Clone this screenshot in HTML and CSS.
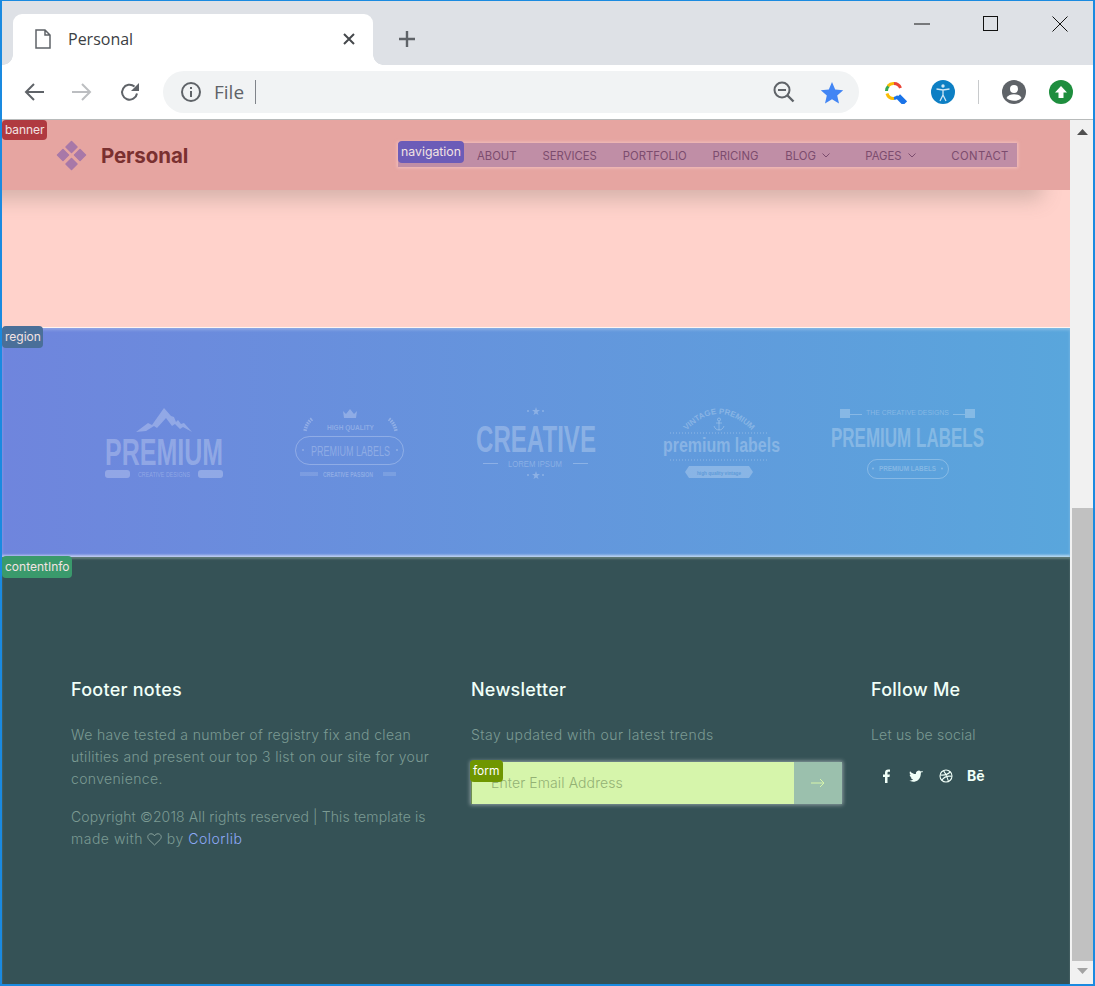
FILE: index.html
```html
<!DOCTYPE html>
<html lang="en">
<head>
<meta charset="utf-8">
<title>Personal</title>
<link rel="stylesheet" href="styles.css">
</head>
<body>
<div class="window">
  <header class="tabstrip">
    <div class="tab">
      <svg class="tab-doc" width="16" height="20" viewBox="0 0 16 20"><path d="M1 1h9l5 5v13H1z M10 1v5h5" fill="none" stroke="#5f6368" stroke-width="1.5"/></svg>
      <span class="tab-title">Personal</span>
      <svg class="tab-close" width="14" height="14" viewBox="0 0 14 14"><path d="M2 2l10 10M12 2L2 12" stroke="#45484c" stroke-width="2"/></svg>
    </div>
    <svg class="newtab" width="18" height="18" viewBox="0 0 18 18"><path d="M9 1v16M1 9h16" stroke="#5f6368" stroke-width="2.4"/></svg>
    <div class="winctl">
      <svg width="16" height="16" viewBox="0 0 16 16"><path d="M0 8h16" stroke="#111" stroke-width="1"/></svg>
      <svg width="16" height="16" viewBox="0 0 16 16"><rect x=".5" y=".5" width="14" height="14" fill="none" stroke="#111"/></svg>
      <svg width="16" height="16" viewBox="0 0 16 16"><path d="M.5.5l15 15M15.500.5l-15 15" stroke="#111"/></svg>
    </div>
  </header>
  <nav class="toolbar">
    <svg class="tool tool-back" width="22" height="20" viewBox="0 0 22 20"><path d="M21 10H3M11 2l-8 8 8 8" fill="none" stroke="#5f6368" stroke-width="2"/></svg>
    <svg class="tool tool-fwd" width="22" height="20" viewBox="0 0 22 20"><path d="M1 10h18M11 2l8 8-8 8" fill="none" stroke="#bcbec1" stroke-width="2"/></svg>
    <svg class="tool tool-reload" width="22" height="22" viewBox="0 0 22 22"><path d="M18 12.500A7.500 7.500 0 1 1 15.500 5.500" fill="none" stroke="#5f6368" stroke-width="2"/><path d="M20 2v8h-8z" fill="#5f6368"/></svg>
    <div class="omnibox">
      <svg class="info" width="22" height="22" viewBox="0 0 22 22"><circle cx="11" cy="11" r="9" fill="none" stroke="#5f6368" stroke-width="2"/><path d="M11 10v6M11 6v2" stroke="#5f6368" stroke-width="2"/></svg>
      <span class="omni-text">File</span>
      <span class="omni-caret"></span>
      <svg class="zoomout" width="22" height="22" viewBox="0 0 22 22"><circle cx="9" cy="9" r="7.500" fill="none" stroke="#5f6368" stroke-width="2"/><path d="M5 9h8" stroke="#5f6368" stroke-width="2"/><path d="M14.500 14.500l6 6" stroke="#5f6368" stroke-width="2.400"/></svg>
      <svg class="star" width="24" height="23" viewBox="0 0 24 23"><path d="M12 1l3.200 7.500 8 .7-6 5.300 1.800 8L12 18.300 5 22.500l1.800-8-6-5.300 8-.7z" fill="#4285f4"/></svg>
    </div>
    <div class="ext-group">
      <svg class="ext" width="24" height="24" viewBox="0 0 24 24"><path d="M3.500 11a7 7 0 0 1 2-5" fill="none" stroke="#34a853" stroke-width="3"/><path d="M5 6a7 7 0 0 1 6-2.500" fill="none" stroke="#fbbc05" stroke-width="3"/><path d="M11 3.500a7 7 0 0 1 6.500 4.500" fill="none" stroke="#ea4335" stroke-width="3"/><path d="M4 13.500a7 7 0 0 0 7 5" fill="none" stroke="#fbbc05" stroke-width="3"/><path d="M11 18.500a7 7 0 0 0 3-1.200l6 6 2-2-6-6" fill="none" stroke="#1a73e8" stroke-width="3"/></svg>
      <svg class="ext" width="24" height="24" viewBox="0 0 24 24"><circle cx="12" cy="12" r="12" fill="#0d7fc4"/><circle cx="12" cy="6" r="1.700" fill="#cfe6f5"/><path d="M5.500 9l6.500 1 6.500-1M12 10v5M12 15l-3 6M12 15l3 6" fill="none" stroke="#cfe6f5" stroke-width="1.300"/></svg>
      <span class="ext-sep"></span>
      <svg class="ext" width="24" height="24" viewBox="0 0 24 24"><circle cx="12" cy="12" r="12" fill="#5f6368"/><circle cx="12" cy="9" r="4" fill="#fff"/><path d="M4.500 18c1.500-3 4.500-3.800 7.500-3.800s6 .8 7.500 3.800c-2 2-4.500 2.700-7.500 2.700s-5.500-.7-7.500-2.700z" fill="#fff"/></svg>
      <svg class="ext" width="24" height="24" viewBox="0 0 24 24"><circle cx="12" cy="12" r="12" fill="#1e8e3e"/><path d="M12 6l6 6.500h-3.500V18h-5v-5.500H6z" fill="#fff"/></svg>
    </div>
  </nav>
  <div class="viewport">
    <main class="page">
      <section class="banner">
        <span class="tag tag-banner">banner</span>
        <div class="brand">
          <svg width="34" height="32" viewBox="0 0 34 32" class="brand-mark"><g fill="#a878a8" stroke="#a878a8" stroke-width="1.500" stroke-linejoin="round"><path d="M16.500 1.500l5.500 5.500-5.500 5.500L11 7z"/><path d="M8 9.500l5.500 5.500L8 20.500 2.500 15z"/><path d="M25 9.500l5.500 5.500-5.500 5.500-5.500-5.500z"/><path d="M16.500 18.500l5.500 5.500-5.500 5.500L11 24z"/></g></svg>
          <span class="brand-name">Personal</span>
        </div>
        <div class="mainnav">
          <span class="tag tag-nav">navigation</span>
          <span class="nav-item">About</span>
          <span class="nav-item">Services</span>
          <span class="nav-item">Portfolio</span>
          <span class="nav-item">Pricing</span>
          <span class="nav-item nav-blog">Blog <svg class="chev" width="8" height="5" viewBox="0 0 8 5"><path d="M.5.500L4 4 7.500.5" fill="none" stroke="#7c4c6e"/></svg></span>
          <span class="nav-item nav-pages">Pages <svg class="chev" width="8" height="5" viewBox="0 0 8 5"><path d="M.5.500L4 4 7.500.5" fill="none" stroke="#7c4c6e"/></svg></span>
          <span class="nav-item nav-contact">Contact</span>
        </div>
      </section>
      <section class="blank"></section>
      <section class="region">
        <span class="tag tag-region">region</span>
        <svg class="logo" viewBox="0 0 186 80" width="186" height="80">
          <path class="lf" d="M65 29l12-9 4 2 12-17 7 8 3 1 2 5 2-2 3 4 3-1 8 9-9-5-3 2-5-5-3 2-6-8-9 10-3-2-8 5z"/>
          <text class="lf lc" x="34" y="62" font-size="36" textLength="118" lengthAdjust="spacingAndGlyphs">PREMIUM</text>
          <rect class="lf" x="34" y="67" width="25" height="8" rx="3"/><rect class="lf" x="127" y="67" width="25" height="8" rx="3"/>
          <text class="lf" x="67" y="74" font-size="7" textLength="52" lengthAdjust="spacingAndGlyphs">CREATIVE DESIGNS</text>
        </svg>
        <svg class="logo" viewBox="0 0 186 80" width="186" height="80">
          <path class="lf" d="M87 15l-1-7 3 3 4-5 4 5 3-3-1 7z"/>
          <path class="lwheat" d="M55 16c-4 3-6 7-7 12M132 16c4 3 6 7 7 12"/>
          <text class="lf lb" x="70" y="27" font-size="7" textLength="47" lengthAdjust="spacingAndGlyphs">HIGH QUALITY</text>
          <rect class="ls" x="38.500" y="33.500" width="108" height="28" rx="14"/>
          <text class="lf" x="54" y="53" font-size="14" textLength="79" lengthAdjust="spacingAndGlyphs">PREMIUM LABELS</text>
          <circle class="lf" cx="46" cy="47" r="1"/><circle class="lf" cx="140" cy="47" r="1"/>
          <path class="ls" d="M43 70h18M43 72h18M126 70h13M126 72h13"/>
          <text class="lf lb" x="66" y="74" font-size="7" textLength="50" lengthAdjust="spacingAndGlyphs">CREATIVE PASSION</text>
        </svg>
        <svg class="logo" viewBox="0 0 186 80" width="186" height="80">
          <path class="lf" d="M93 4l1 3h3l-2.500 2 1 3L93 10.500 90.500 12l1-3L89 7h3z"/><circle class="lf" cx="85" cy="8" r="1"/><circle class="lf" cx="100" cy="8" r="1"/>
          <text class="lf lc" x="33" y="49" font-size="36" textLength="120" lengthAdjust="spacingAndGlyphs">CREATIVE</text>
          <text class="lf" x="65" y="64" font-size="9" textLength="54" lengthAdjust="spacingAndGlyphs">LOREM IPSUM</text>
          <path class="ls" d="M40 60.500h15M130 60.500h15"/>
          <path class="lf" d="M93 68l1 3h3l-2.500 2 1 3L93 74.500 90.500 76l1-3L89 71h3z"/><circle class="lf" cx="85" cy="72" r="1"/><circle class="lf" cx="100" cy="72" r="1"/>
        </svg>
        <svg class="logo" viewBox="0 0 186 80" width="186" height="80">
          <path id="arc4" d="M57 28Q90-6 123 28" fill="none"/>
          <text class="lf lb" font-size="8"><textPath href="#arc4" startOffset="50%" text-anchor="middle">VINTAGE PREMIUM</textPath></text>
          <circle class="ls" cx="90" cy="16.500" r="1.500"/><path class="ls" d="M90 18v9M87 20h6M85 23c1 3 3 4 5 4s4-1 5-4"/>
          <path class="ldot" d="M41 30h98M41 57h98"/>
          <text class="lf lc" x="34" y="49" font-size="20" textLength="117" lengthAdjust="spacingAndGlyphs">premium labels</text>
          <path class="lf" d="M60 63h60l4 6-4 6H60l-4-6z"/>
          <text class="lnote" x="68" y="72" font-size="6" textLength="44" lengthAdjust="spacingAndGlyphs">high quality vintage</text>
        </svg>
        <svg class="logo" viewBox="0 0 186 80" width="186" height="80">
          <rect class="lf" x="25" y="6" width="10" height="9"/><rect class="lf" x="150" y="6" width="10" height="9"/>
          <path class="ls" d="M35 11.500h12M138 11.500h12"/>
          <text class="lf" x="51" y="12" font-size="8" textLength="83" lengthAdjust="spacingAndGlyphs">THE CREATIVE DESIGNS</text>
          <text class="lf lc" x="16" y="44" font-size="27.500" textLength="153" lengthAdjust="spacingAndGlyphs">PREMIUM LABELS</text>
          <rect class="ls" x="52.500" y="56.500" width="81" height="19" rx="9.500"/>
          <text class="lf lb" x="64" y="68" font-size="7" textLength="57" lengthAdjust="spacingAndGlyphs">PREMIUM LABELS</text>
          <circle class="lf" cx="58" cy="65.500" r="1"/><circle class="lf" cx="127" cy="65.500" r="1"/>
        </svg>
      </section>
      <footer class="foot">
        <span class="tag tag-foot">contentInfo</span>
        <div class="col">
          <h4 class="col-title">Footer notes</h4>
          <p class="col-text">We have tested a number of registry fix and clean utilities and present our top 3 list on our site for your convenience.</p>
          <p class="col-text col-copy">Copyright ©2018 All rights reserved | This template is <span class="copy-end">made with <svg class="heart" width="15" height="13" viewBox="0 0 15 13"><path d="M7.500 12L1.800 6.500C-.5 3.500 1.500.8 4 .8c1.500 0 2.800.8 3.500 2C8.200 1.600 9.500.8 11 .8c2.500 0 4.500 2.700 2.200 5.700z" fill="none" stroke="#8aa39d"/></svg> by <a class="credit" href="#">Colorlib</a></span></p>
        </div>
        <div class="col">
          <h4 class="col-title">Newsletter</h4>
          <p class="col-text col-wide">Stay updated with our latest trends</p>
          <form class="signup">
            <span class="tag tag-form">form</span>
            <span class="signup-input">Enter Email Address</span>
            <span class="signup-btn"><svg width="14" height="10" viewBox="0 0 14 10"><path d="M0 5h13M9 1l4 4-4 4" fill="none" stroke="#d6f5ab"/></svg></span>
          </form>
        </div>
        <div class="col">
          <h4 class="col-title">Follow Me</h4>
          <p class="col-text col-narrow">Let us be social</p>
          <div class="social">
            <svg class="soc" width="14" height="14" viewBox="0 0 14 14"><path d="M8.500 14V8h2l.4-2.500H8.500V4c0-.8.3-1.200 1.200-1.200H11V.6C10.600.5 10 .4 9.200.4 7.300.4 6 1.500 6 3.700v1.800H4V8h2v6z" fill="#f0fff8"/></svg>
            <svg class="soc" width="14" height="14" viewBox="0 0 14 14"><path d="M14 2.900c-.5.200-1 .4-1.600.4.600-.3 1-.9 1.200-1.500-.5.300-1.100.6-1.800.7a2.800 2.800 0 0 0-4.800 2.600C4.600 5 2.500 3.900 1.100 2.200.3 3.500.7 5.200 2 6c-.5 0-.9-.1-1.300-.3 0 1.400 1 2.500 2.300 2.800-.4.100-.9.100-1.300 0 .4 1.100 1.400 1.900 2.600 2-1.200.9-2.700 1.300-4.300 1.100 4.100 2.600 11.900 1.200 11.900-7.900.6-.4 1.100-.9 1.500-1.500z" fill="#f0fff8"/></svg>
            <svg class="soc" width="14" height="14" viewBox="0 0 14 14"><g fill="none" stroke="#f0fff8" stroke-width="1.100"><circle cx="7" cy="7" r="6"/><path d="M4.500 1.700c2 2.500 4 6.500 5 10.800M1.200 6c4 .5 7.500-.5 10-3M2.800 11.200c2-3 5.500-4.700 10-3.900"/></g></svg>
            <span class="soc-be">Bē</span>
          </div>
        </div>
      </footer>
    </main>
    <aside class="scrollbar">
      <svg class="sb-arrow" width="11" height="6" viewBox="0 0 11 6"><path d="M5.500 0L11 6H0z" fill="#505050"/></svg>
      <div class="sb-track"><div class="sb-thumb"></div></div>
      <svg class="sb-arrow" width="11" height="6" viewBox="0 0 11 6"><path d="M0 0h11L5.500 6z" fill="#a3a3a3"/></svg>
    </aside>
  </div>
</div>
</body>
</html>
```
FILE: styles.css
```css
* { box-sizing: border-box; }
html, body { margin: 0; padding: 0; overflow: hidden; }
.window {
  width: 1095px; height: 986px;
  display: flex; flex-direction: column;
  border: solid #1a8ae0; border-width: 1px 2px 2px 2px;
  background: #fff; overflow: hidden;
  font-family: Inter, "Liberation Sans", sans-serif;
}

/* browser chrome */
.tabstrip { height: 64px; flex: none; background: #dee1e6; display: flex; align-items: flex-start; padding: 13px 0 0 11px; position: relative; }
.tab { width: 360px; height: 51px; background: #fff; border-radius: 9px 9px 0 0; display: flex; align-items: center; padding: 0 17px 2px 22px; position: relative; margin-right: 25px; }
.tab::before, .tab::after { content: ""; position: absolute; bottom: 0; width: 10px; height: 10px; }
.tab::before { left: -10px; background: radial-gradient(circle at 0 0, #dee1e6 9.500px, #fff 10px); }
.tab::after { right: -10px; background: radial-gradient(circle at 100% 0, #dee1e6 9.500px, #fff 10px); }
.tab-title { font-family: "Open Sans", sans-serif; font-size: 16px; color: #3c4043; margin-left: 17px; flex: 1; }
.tab-doc { flex: none; }
.newtab { margin-top: 16px; }
.winctl { position: absolute; right: 0; top: 15px; display: flex; gap: 53px; padding-right: 25px; }
.toolbar { height: 55px; flex: none; background: #fff; display: flex; align-items: center; padding: 1px 0 1px 21px; border-bottom: 1px solid #b8bbbb; }
.tool { flex: none; margin-right: 26px; }
.tool-reload { margin-right: 22px; }
.omnibox { width: 696px; height: 42px; border-radius: 21px; background: #f1f3f4; display: flex; align-items: center; padding: 0 15px 0 17px; flex: none; }
.omni-text { font-family: "Open Sans", sans-serif; font-size: 19px; color: #5f6368; margin-left: 12px; }
.omni-caret { width: 1px; height: 24px; background: #80848a; margin-left: 11px; margin-right: auto; flex: none; }
.zoomout { margin-right: 25px; margin-left: 1px; }
.ext-group { display: flex; align-items: center; margin-left: 24px; }
.ext { flex: none; margin-right: 23.500px; }
.ext-sep { width: 1px; height: 24px; background: #c8cacc; margin-right: 22.500px; }

/* viewport */
.viewport { flex: 1; display: flex; min-height: 0; }
.page { flex: none; width: 1068px; display: flex; flex-direction: column; }
.scrollbar { flex: none; width: 23px; background: #f1f1f1; display: flex; flex-direction: column; align-items: center; padding: 9px 0 10px 2px; }
.sb-track { flex: 1; width: 100%; display: flex; flex-direction: column; justify-content: flex-end; padding: 0 0 7px; }
.sb-thumb { height: 453px; background: #c1c1c1; }

.tag { position: absolute; left: 0; top: 0; z-index: 5; border-radius: 4px; font-size: 12px; line-height: 20px; height: 20px; padding: 0 3px; color: #f3e3e3; white-space: nowrap; }

.banner { height: 70px; flex: none; position: relative; z-index: 2; background: #e6a5a1; display: flex; align-items: center; padding: 5px 53px 2px 53px; }
.tag-banner { background: #b03a40; letter-spacing: -.1px; }
.brand { display: flex; align-items: center; gap: 12px; margin-bottom: 2px; }
.brand-name { font-size: 20.500px; font-weight: 700; color: #7a3030; letter-spacing: -.1px; }
.brand-mark { display: block; }
.mainnav { position: relative; margin-left: auto; height: 24px; width: 619px; background: #c08ea6; box-shadow: 0 0 3px 1px rgba(255,220,220,.5); display: flex; align-items: center; gap: 26px; padding: 1px 0 0 79px; margin-bottom: 3px; }
.nav-item { font-size: 11.300px; text-transform: uppercase; color: #7c4c6e; white-space: nowrap; display: flex; align-items: center; }
.nav-blog { width: 54px; margin-left: 1px; }
.nav-pages { width: 60px; }
.nav-contact { letter-spacing: .4px; }
.chev { margin-left: 6px; }
.tag-nav { top: -2px; left: 0; height: 22px; line-height: 22px; background: #6c5cb8; padding: 0 3px; font-size: 12.300px; }

.blank { height: 138px; flex: none; background: #ffd2cb; position: relative; overflow: hidden; }
.blank::before { content: ""; position: absolute; top: -30px; height: 30px; left: -40px; right: 28px; box-shadow: 0 9px 20px rgba(120,110,100,.32); }

.region { height: 229px; flex: none; position: relative; background: linear-gradient(90deg, #6f85dd, #59a6dc); display: flex; align-items: flex-start; padding: 75px 0 0 69px; box-shadow: 0 -1px 0 #fff5f0, inset 0 2px 3px rgba(255,255,255,.25); }
.logo { flex: none; display: block; overflow: visible; }
.lf { fill: #fff; fill-opacity: .26; font-family: "Liberation Sans", Arial, sans-serif; }
.lb { font-weight: 700; }
.lc { font-family: "Liberation Sans Narrow", "Liberation Sans", Arial, sans-serif; font-weight: 700; }
.ls { fill: none; stroke: #fff; stroke-opacity: .26; stroke-width: 1; }
.lwheat { fill: none; stroke: #fff; stroke-opacity: .28; stroke-width: 3.500; stroke-dasharray: 1.500 1; }
.ldot { fill: none; stroke: #fff; stroke-opacity: .3; stroke-width: 1; stroke-dasharray: 1 2; }
.lnote { fill: #5f9bd8; font-family: "Liberation Sans", Arial, sans-serif; font-weight: 700; }
.tag-region { top: -2px; height: 22px; line-height: 22px; background: #4a6f99; padding-right: 2px; }

.foot { flex: 1; position: relative; background: #355256; display: flex; padding: 122px 0 0 69px; box-shadow: 0 -2px 2px rgba(255,255,255,.55), inset 0 2px 2px rgba(180,200,190,.35); }
.tag-foot { top: -1px; height: 22px; line-height: 22px; background: #3a9a6c; padding-right: 2px; }
.col { width: 400px; flex: none; }
.col-title { margin: 0 0 23px; font-size: 18px; line-height: 22px; font-weight: 500; color: #f0fff8; letter-spacing: .25px; }
.col-text { margin: 0; font-size: 14px; font-weight: 300; line-height: 22px; color: #7b9a93; width: 370px; letter-spacing: .35px; }
.col-copy { margin-top: 16px; letter-spacing: .13px; }
.col-wide { letter-spacing: .49px; }
.col-narrow { letter-spacing: .2px; }
.copy-end { letter-spacing: .5px; }
.heart { vertical-align: -2px; }
.credit { color: #8ea9f7; text-decoration: none; }

.signup { position: relative; display: flex; width: 371px; height: 42px; margin-top: 16px; box-shadow: 0 0 4px 1px rgba(255,255,255,.45); }
.signup-input { flex: 1; background: #d6f5ab; font-size: 14px; font-weight: 300; color: #93b174; line-height: 42px; padding-left: 19px; border-left: 1px solid #6f8f50; letter-spacing: .1px; }
.signup-btn { width: 48px; background: #9bc0ad; display: flex; align-items: center; justify-content: center; }
.tag-form { top: -2px; left: -1px; height: 22px; line-height: 22px; background: #6f9600; color: #fff; }

.social { display: flex; align-items: center; gap: 16px; margin-top: 23px; padding-left: 8px; }
.soc { flex: none; display: block; }
.soc-be { font-size: 14px; font-weight: 700; color: #f0fff8; line-height: 14px; margin-left: -2px; }
```
